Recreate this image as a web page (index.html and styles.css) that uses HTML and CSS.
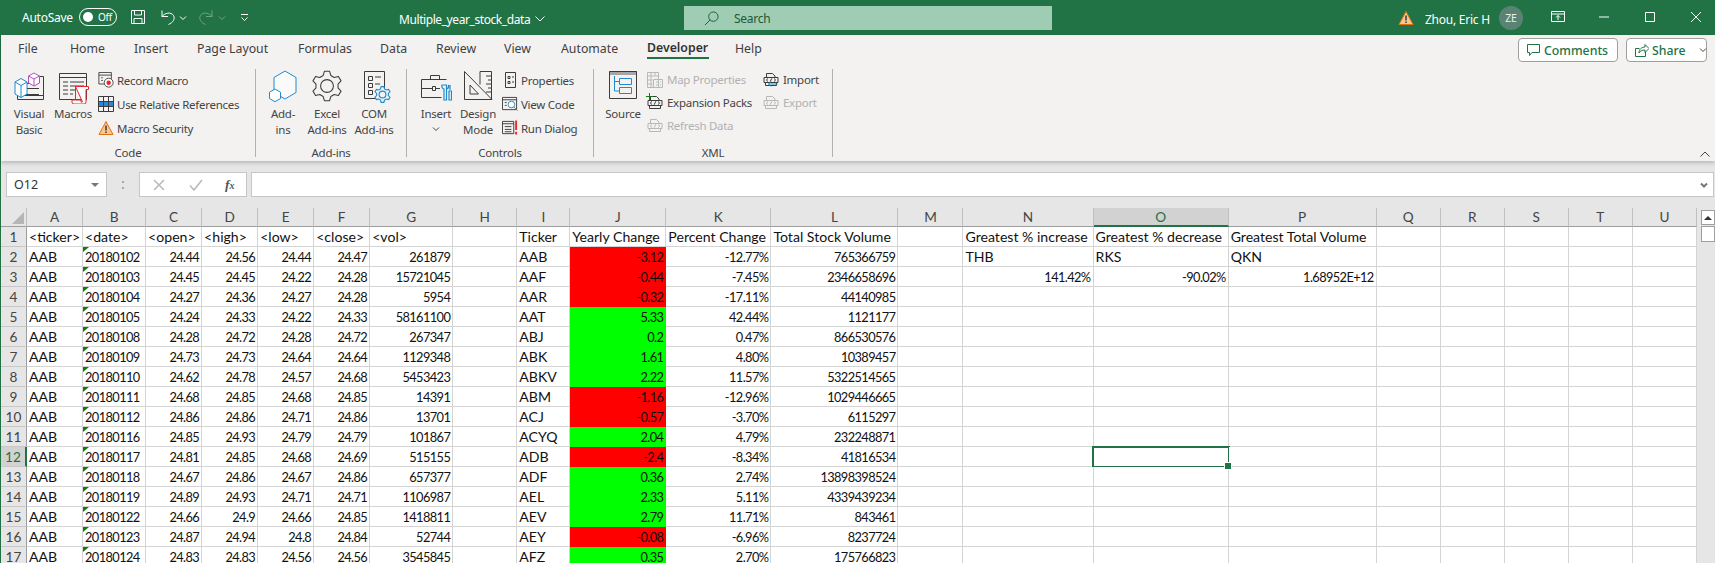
FILE: index.html
```html
<!DOCTYPE html>
<html lang="en">
<head>
<meta charset="utf-8">
<title>Multiple_year_stock_data - Excel</title>
<link rel="stylesheet" href="styles.css">
</head>
<body>
<svg class="defs" width="0" height="0" aria-hidden="true">
  <symbol id="gear" viewBox="-15 -15 30 30"><polygon points="-2.43,-13.79 2.43,-13.79 3.59,-9.87 6.75,-8.04 10.72,-9 13.16,-4.79 10.34,-1.82 10.34,1.82 13.16,4.79 10.72,9 6.75,8.04 3.59,9.87 2.43,13.79 -2.43,13.79 -3.59,9.87 -6.75,8.04 -10.72,9 -13.16,4.79 -10.34,1.82 -10.34,-1.82 -13.16,-4.79 -10.72,-9 -6.75,-8.04 -3.59,-9.87"/><circle r="6"/></symbol>
  <symbol id="xmldoc" viewBox="0 0 16 16"><path d="M3.5 5V1.5h6l2.5 2.5v1M1 5.5h14v5H1zM2.5 10.5v3h11v-3"/><path d="M5 6.5L3.3 8 5 9.5M11 6.5l1.7 1.5L11 9.5M8.8 6.3L7.2 9.7"/></symbol>
  <symbol id="caret" viewBox="0 0 8 6"><path d="M1 1.5l3 3 3-3"/></symbol>
</svg>

<header class="titlebar">
  <span class="autosave">AutoSave</span>
  <span class="toggle"><i class="knob"></i><span class="off">Off</span></span>
  <svg class="qa save" viewBox="0 0 16 16"><path d="M1.500 1.500h13v13h-13zM4.500 1.500v4.500h7v-4.500M4 14.500v-5h8v5"/></svg>
  <svg class="qa undo" viewBox="0 0 16 16"><path d="M2 1.500v6h6M2 7.500c2.500-3.500 9-5 11.500-1 2 3.500-.5 7-5 9"/></svg>
  <svg class="qc caret-undo"><use href="#caret"/></svg>
  <svg class="qa redo" viewBox="0 0 16 16"><path d="M14 1.500v6H8M14 7.500c-2.500-3.500-9-5-11.500-1-2 3.500.5 7 5 9"/></svg>
  <svg class="qc caret-redo"><use href="#caret"/></svg>
  <svg class="custom" viewBox="0 0 9 9"><path d="M1 1.500h7M1.500 4.500l3 3 3-3"/></svg>
  <span class="doc-title">Multiple_year_stock_data</span>
  <svg class="title-chev" viewBox="0 0 10 6"><path d="M.5.5l4.500 4.500L9.500.5"/></svg>
  <div class="search">
    <svg class="search-icon" viewBox="0 0 16 16"><circle cx="10" cy="6" r="5"/><path d="M6.500 9.500L1 15"/></svg>
    <span>Search</span>
  </div>
  <svg class="warn warn-title" viewBox="0 0 16 16"><path class="warn-tri" d="M8 1.500l7 13H1z"/><path class="warn-mark" d="M8 5.500v5M8 11.500v1.500"/></svg>
  <span class="user">Zhou, Eric H</span>
  <span class="avatar">ZE</span>
  <svg class="win present" viewBox="0 0 14 12"><path d="M.5.5h13v10H.5zM.5 3h13M7 9V4.500M5 6.500l2-2 2 2"/></svg>
  <svg class="win minimize" viewBox="0 0 10 10"><path d="M0 5h10"/></svg>
  <svg class="win maximize" viewBox="0 0 10 10"><path d="M.5.500h9v9h-9z"/></svg>
  <svg class="win close" viewBox="0 0 10 10"><path d="M0 0l10 10M10 0L0 10"/></svg>
</header>

<div class="app">
  <section class="ribbon">
    <div class="tabs-row">
      <nav class="tabs">
        <span>File</span><span>Home</span><span>Insert</span><span>Page Layout</span><span>Formulas</span><span>Data</span><span>Review</span><span>View</span><span>Automate</span><span class="tab-on">Developer</span><span>Help</span>
      </nav>
      <div class="actions">
        <span class="action comments"><svg class="act-ic" viewBox="0 0 14 14"><path d="M.5 1.500h12v8H5l-2.500 3v-3h-2z"/></svg>Comments</span>
        <span class="action share"><svg class="act-ic" viewBox="0 0 14 14"><path d="M.5 5.500h4M.5 5.500v8h10V9M4 10c0-4 3-6 6-6V1.500l4 4-4 4V7c-3 0-5 1-6 3z"/></svg>Share<svg class="share-caret"><use href="#caret"/></svg></span>
      </div>
    </div>

    <div class="ribbon-body">
      <div class="group g-code">
        <div class="tools">
          <div class="big w44">
            <svg class="icon" viewBox="0 0 32 36"><g class="ln"><path d="M4.500 12.500v19h26v-23h-6M14 15.500h12M14 20.500h12M8 26.500h18M4.500 27.500h26"/></g><g class="bl"><path class="wht" d="M2 14l6-3.500 6 3.500v12l-6 3.500L2 26z"/><path d="M2 14l6 3.500 6-3.500M8 17.500v12"/></g><g class="pu"><path class="wht" d="M15.500 8l5.500-3 5.500 3v7l-5.500 3-5.500-3z"/><path d="M15.500 8l5.500 3 5.500-3M21 11v7"/></g></svg>
            <span class="lbl">Visual</span><span class="lbl">Basic</span>
          </div>
          <div class="big w44">
            <svg class="icon" viewBox="0 0 32 36"><g class="ln"><path d="M2.500 5.500h27v26h-27zM2.500 9.500h27M6 14h5M13 14h14M6 18h5M13 18h14M6 22h5M13 22h5M6 26h5M13 26h3"/></g><path class="rd wht" d="M18.500 18.500h13v3h-2.500v12.500a2 2 0 0 1-2 2h-10a2 2 0 0 1-2-2v-2h9v2a1.500 1.500 0 0 0 1.500 0zM18.500 18.500v13"/></svg>
            <span class="lbl">Macros</span>
          </div>
          <div class="small-col col-code">
            <div class="small"><svg class="ic16" viewBox="0 0 17 18"><path class="ln-s" d="M.5.500h14v13H.5zM.5 3.500h14M3 6.500h2M3 9.500h2"/><circle class="rec-o" cx="11.500" cy="12" r="5"/><circle class="rec-i" cx="11.500" cy="12" r="2.500"/></svg><span>Record Macro</span></div>
            <div class="small"><svg class="ic16" viewBox="0 0 16 16"><rect class="bl-f" x="1" y="5.500" width="14" height="5"/><path class="ln-s" d="M.5.500h15v15H.5zM.5 5.500h15M.5 10.500h15M5.500.500v15M10.500.500v15"/></svg><span>Use Relative References</span></div>
            <div class="small"><svg class="ic16" viewBox="0 0 16 16"><path class="warn-tri" d="M8 1.500l7 13H1z"/><path class="warn-mark" d="M8 5.500v5M8 11.500v1.500"/></svg><span>Macro Security</span></div>
          </div>
        </div>
        <div class="group-label">Code</div>
      </div>
      <i class="sep"></i>

      <div class="group g-addins">
        <div class="tools">
          <div class="big w44">
            <svg class="icon" viewBox="0 0 32 36"><path class="bl wht2" d="M18 3l11 6.500v15L18 31l-11-6.500v-15z"/><path class="bl wht" d="M8 21l5.500 3.200v6.300L8 33.700 2.500 30.500v-6.300z"/></svg>
            <span class="lbl">Add-</span><span class="lbl">ins</span>
          </div>
          <div class="big w44">
            <svg class="icon gear-big"><use href="#gear"/></svg>
            <span class="lbl">Excel</span><span class="lbl">Add-ins</span>
          </div>
          <div class="big w50">
            <span class="com-wrap"><svg class="icon" viewBox="0 0 32 36"><path class="ln-s" d="M6.500 3.500h20v18M6.500 3.500v27h12M10.500 8.500h4v4h-4zM17 9h6M10.500 15.500h4v4h-4zM17 16h5M10.500 22.500h4v4h-4z"/></svg><svg class="gear-small"><use href="#gear"/></svg></span>
            <span class="lbl">COM</span><span class="lbl">Add-ins</span>
          </div>
        </div>
        <div class="group-label">Add-ins</div>
      </div>
      <i class="sep"></i>

      <div class="group g-controls">
        <div class="tools">
          <div class="big w44">
            <svg class="icon" viewBox="0 0 32 36"><path class="ln-s" d="M1.500 11.500h25M1.500 11.500v18h20M1.500 20.500h11M16 20.500h4M10.500 11.500v-4h9v4M12.500 18.500h3v4h-3z"/><path class="bl bl-w" d="M22 17a3 3 0 0 0 2 4v11h2.500V21a3 3 0 0 0 2-4v3h-2v-3zM30 17v5M29 23h2.500v9H29z"/></svg>
            <span class="lbl">Insert</span><svg class="lbl-caret"><use href="#caret"/></svg>
          </div>
          <div class="big w40">
            <svg class="icon" viewBox="0 0 32 36"><path class="ln-s" d="M2.500 3.500L30 31.500H2.500zM8 17l8.500 9H8zM18 3.500h11.500v28M18 3.500v13M24 8h5.500M26 12h3.500M24 16h5.500M26 20h3.500M24 24h5.500"/></svg>
            <span class="lbl">Design</span><span class="lbl">Mode</span>
          </div>
          <div class="small-col col-ctrl">
            <div class="small"><svg class="ic16" viewBox="0 0 16 16"><path class="ln-s" d="M3.500.500h10v15h-10zM6 4.500h2v2H6zM10 5h2M6 9.500h2v2H6zM10 10h2"/></svg><span>Properties</span></div>
            <div class="small"><svg class="ic16" viewBox="0 0 17 17"><path class="ln-s" d="M.5 1.500h15v13H.5zM.5 4h15M3 7h2M3 10h2"/><circle class="bl wht" cx="10" cy="9" r="3.500"/><path class="bl" d="M12.500 11.500l4 4"/></svg><span>View Code</span></div>
            <div class="small"><svg class="ic16" viewBox="0 0 17 17"><path class="ln-s" d="M.5 1.500h12v13H.5zM.5 4h12M3 7h7M3 10h7M3 12.500h7"/><path class="rd rd-b" d="M15 .500v10M15 12.500v3"/></svg><span>Run Dialog</span></div>
          </div>
        </div>
        <div class="group-label">Controls</div>
      </div>
      <i class="sep"></i>

      <div class="group g-xml">
        <div class="tools">
          <div class="big w48">
            <svg class="icon" viewBox="0 0 32 36"><rect class="src-h" x="2" y="3" width="28" height="4"/><path class="ln-s" d="M2.500 3.500h27v27h-27z"/><path class="bl" d="M12.500 10.500h12v6h-12zM12.500 19.500h12v6h-12zM7.500 8v15h5M7.500 13.500h5"/></svg>
            <span class="lbl">Source</span>
          </div>
          <div class="small-col col-xml">
            <div class="small off-state"><svg class="ic16" viewBox="0 0 16 16"><path class="dis" d="M.5.500h11v15H.5zM.5 4h11M.5 8h5M.5 12h5M4 .500v15M8 .500v3M6.500 7.500h9v8h-9zM9 10h2M13 10h1M9 13h2M13 13h1"/></svg><span>Map Properties</span></div>
            <div class="small"><span class="plus-wrap"><svg class="ic16 xml-ic"><use href="#xmldoc"/></svg><svg class="plus" viewBox="0 0 7 7"><path d="M3.500 0v7M0 3.500h7"/></svg></span><span>Expansion Packs</span></div>
            <div class="small off-state"><svg class="ic16 xml-dis"><use href="#xmldoc"/></svg><span>Refresh Data</span></div>
          </div>
          <div class="small-col col-xml2">
            <div class="small"><span class="plus-wrap"><svg class="ic16 xml-ic"><use href="#xmldoc"/></svg><svg class="io-arrow" viewBox="0 0 10 6"><path d="M10 3H1M3.500.500L1 3l2.500 2.500"/></svg></span><span>Import</span></div>
            <div class="small off-state"><svg class="ic16 xml-dis"><use href="#xmldoc"/></svg><span>Export</span></div>
          </div>
        </div>
        <div class="group-label">XML</div>
      </div>
      <i class="sep"></i>
      <svg class="collapse" viewBox="0 0 10 6"><path d="M.5 5.500L5 1l4.500 4.500"/></svg>
    </div>
  </section>

  <div class="formula-row">
    <div class="namebox"><span>O12</span><i class="tri-down"></i></div>
    <span class="grip"></span>
    <div class="fx-box">
      <svg class="fx-ic" viewBox="0 0 12 12"><path d="M1 1l10 10M11 1L1 11"/></svg>
      <svg class="fx-ic check" viewBox="0 0 14 12"><path d="M1 6.500L5 11 13 1"/></svg>
      <span class="fx">f<sub>x</sub></span>
    </div>
    <div class="formula-input"><svg class="formula-caret"><use href="#caret"/></svg></div>
  </div>

  <div class="sheet-row">
    <table class="sheet">
      <colgroup><col class="c-h"><col class="c56"><col class="c63"><col class="c56"><col class="c56"><col class="c56"><col class="c56"><col class="c83"><col class="c64"><col class="c53"><col class="c96"><col class="c105"><col class="c127"><col class="c65"><col class="c130"><col class="c135"><col class="c148"><col class="c64"><col class="c64"><col class="c64"><col class="c64"><col class="c64"></colgroup>
      <thead>
        <tr><th class="corner"><i class="corner-tri"></i></th><th>A</th><th>B</th><th>C</th><th>D</th><th>E</th><th>F</th><th>G</th><th>H</th><th>I</th><th>J</th><th>K</th><th>L</th><th>M</th><th>N</th><th class="col-on">O</th><th>P</th><th>Q</th><th>R</th><th>S</th><th>T</th><th>U</th></tr>
      </thead>
      <tbody>
        <tr><th>1</th><td>&lt;ticker&gt;</td><td>&lt;date&gt;</td><td>&lt;open&gt;</td><td>&lt;high&gt;</td><td>&lt;low&gt;</td><td>&lt;close&gt;</td><td>&lt;vol&gt;</td><td></td><td>Ticker</td><td>Yearly Change</td><td>Percent Change</td><td>Total Stock Volume</td><td></td><td>Greatest % increase</td><td>Greatest % decrease</td><td>Greatest Total Volume</td><td></td><td></td><td></td><td></td><td></td></tr>
        <tr><th>2</th><td>AAB</td><td class="d">20180102</td><td class="n">24.44</td><td class="n">24.56</td><td class="n">24.44</td><td class="n">24.47</td><td class="n">261879</td><td></td><td>AAB</td><td class="n red">-3.12</td><td class="n">-12.77%</td><td class="n">765366759</td><td></td><td>THB</td><td>RKS</td><td>QKN</td><td></td><td></td><td></td><td></td><td></td></tr>
        <tr><th>3</th><td>AAB</td><td class="d">20180103</td><td class="n">24.45</td><td class="n">24.45</td><td class="n">24.22</td><td class="n">24.28</td><td class="n">15721045</td><td></td><td>AAF</td><td class="n red">-0.44</td><td class="n">-7.45%</td><td class="n">2346658696</td><td></td><td class="n">141.42%</td><td class="n">-90.02%</td><td class="n">1.68952E+12</td><td></td><td></td><td></td><td></td><td></td></tr>
        <tr><th>4</th><td>AAB</td><td class="d">20180104</td><td class="n">24.27</td><td class="n">24.36</td><td class="n">24.27</td><td class="n">24.28</td><td class="n">5954</td><td></td><td>AAR</td><td class="n red">-0.32</td><td class="n">-17.11%</td><td class="n">44140985</td><td></td><td></td><td></td><td></td><td></td><td></td><td></td><td></td><td></td></tr>
        <tr><th>5</th><td>AAB</td><td class="d">20180105</td><td class="n">24.24</td><td class="n">24.33</td><td class="n">24.22</td><td class="n">24.33</td><td class="n">58161100</td><td></td><td>AAT</td><td class="n grn">5.33</td><td class="n">42.44%</td><td class="n">1121177</td><td></td><td></td><td></td><td></td><td></td><td></td><td></td><td></td><td></td></tr>
        <tr><th>6</th><td>AAB</td><td class="d">20180108</td><td class="n">24.28</td><td class="n">24.72</td><td class="n">24.28</td><td class="n">24.72</td><td class="n">267347</td><td></td><td>ABJ</td><td class="n grn">0.2</td><td class="n">0.47%</td><td class="n">866530576</td><td></td><td></td><td></td><td></td><td></td><td></td><td></td><td></td><td></td></tr>
        <tr><th>7</th><td>AAB</td><td class="d">20180109</td><td class="n">24.73</td><td class="n">24.73</td><td class="n">24.64</td><td class="n">24.64</td><td class="n">1129348</td><td></td><td>ABK</td><td class="n grn">1.61</td><td class="n">4.80%</td><td class="n">10389457</td><td></td><td></td><td></td><td></td><td></td><td></td><td></td><td></td><td></td></tr>
        <tr><th>8</th><td>AAB</td><td class="d">20180110</td><td class="n">24.62</td><td class="n">24.78</td><td class="n">24.57</td><td class="n">24.68</td><td class="n">5453423</td><td></td><td>ABKV</td><td class="n grn">2.22</td><td class="n">11.57%</td><td class="n">5322514565</td><td></td><td></td><td></td><td></td><td></td><td></td><td></td><td></td><td></td></tr>
        <tr><th>9</th><td>AAB</td><td class="d">20180111</td><td class="n">24.68</td><td class="n">24.85</td><td class="n">24.68</td><td class="n">24.85</td><td class="n">14391</td><td></td><td>ABM</td><td class="n red">-1.16</td><td class="n">-12.96%</td><td class="n">1029446665</td><td></td><td></td><td></td><td></td><td></td><td></td><td></td><td></td><td></td></tr>
        <tr><th>10</th><td>AAB</td><td class="d">20180112</td><td class="n">24.86</td><td class="n">24.86</td><td class="n">24.71</td><td class="n">24.86</td><td class="n">13701</td><td></td><td>ACJ</td><td class="n red">-0.57</td><td class="n">-3.70%</td><td class="n">6115297</td><td></td><td></td><td></td><td></td><td></td><td></td><td></td><td></td><td></td></tr>
        <tr><th>11</th><td>AAB</td><td class="d">20180116</td><td class="n">24.85</td><td class="n">24.93</td><td class="n">24.79</td><td class="n">24.79</td><td class="n">101867</td><td></td><td>ACYQ</td><td class="n grn">2.04</td><td class="n">4.79%</td><td class="n">232248871</td><td></td><td></td><td></td><td></td><td></td><td></td><td></td><td></td><td></td></tr>
        <tr><th class="row-on">12</th><td>AAB</td><td class="d">20180117</td><td class="n">24.81</td><td class="n">24.85</td><td class="n">24.68</td><td class="n">24.69</td><td class="n">515155</td><td></td><td>ADB</td><td class="n red">-2.4</td><td class="n">-8.34%</td><td class="n">41816534</td><td></td><td></td><td class="sel"></td><td></td><td></td><td></td><td></td><td></td><td></td></tr>
        <tr><th>13</th><td>AAB</td><td class="d">20180118</td><td class="n">24.67</td><td class="n">24.86</td><td class="n">24.67</td><td class="n">24.86</td><td class="n">657377</td><td></td><td>ADF</td><td class="n grn">0.36</td><td class="n">2.74%</td><td class="n">13898398524</td><td></td><td></td><td></td><td></td><td></td><td></td><td></td><td></td><td></td></tr>
        <tr><th>14</th><td>AAB</td><td class="d">20180119</td><td class="n">24.89</td><td class="n">24.93</td><td class="n">24.71</td><td class="n">24.71</td><td class="n">1106987</td><td></td><td>AEL</td><td class="n grn">2.33</td><td class="n">5.11%</td><td class="n">4339439234</td><td></td><td></td><td></td><td></td><td></td><td></td><td></td><td></td><td></td></tr>
        <tr><th>15</th><td>AAB</td><td class="d">20180122</td><td class="n">24.66</td><td class="n">24.9</td><td class="n">24.66</td><td class="n">24.85</td><td class="n">1418811</td><td></td><td>AEV</td><td class="n grn">2.79</td><td class="n">11.71%</td><td class="n">843461</td><td></td><td></td><td></td><td></td><td></td><td></td><td></td><td></td><td></td></tr>
        <tr><th>16</th><td>AAB</td><td class="d">20180123</td><td class="n">24.87</td><td class="n">24.94</td><td class="n">24.8</td><td class="n">24.84</td><td class="n">52744</td><td></td><td>AEY</td><td class="n red">-0.08</td><td class="n">-6.96%</td><td class="n">8237724</td><td></td><td></td><td></td><td></td><td></td><td></td><td></td><td></td><td></td></tr>
        <tr><th>17</th><td>AAB</td><td class="d">20180124</td><td class="n">24.83</td><td class="n">24.83</td><td class="n">24.56</td><td class="n">24.56</td><td class="n">3545845</td><td></td><td>AFZ</td><td class="n grn">0.35</td><td class="n">2.70%</td><td class="n">175766823</td><td></td><td></td><td></td><td></td><td></td><td></td><td></td><td></td><td></td></tr>
      </tbody>
    </table>
    <div class="vscroll"><span class="sb-up"><i class="tri-up"></i></span><span class="sb-thumb"></span></div>
  </div>
</div>
</body>
</html>
```
FILE: styles.css
```css
* { box-sizing: border-box; }
html, body { margin: 0; padding: 0; }
body {
  width: 1715px; height: 563px; overflow: hidden;
  background: #e6e6e6;
  font-family: "Noto Sans", "Open Sans", sans-serif;
  color: #333;
}
svg { display: block; flex: none; fill: none; }
.defs { position: absolute; }

/* title bar */
.titlebar {
  display: flex; align-items: center; height: 35px;
  padding-left: 22px; background: #217346; color: #fff;
  font-size: 12px; letter-spacing: -.25px; white-space: nowrap;
}
.titlebar svg { stroke: #fff; }
.autosave { width: 50px; }
.toggle {
  display: flex; align-items: center; width: 38px; height: 18px;
  margin: -2px 0 0 7px; padding-left: 3px;
  border: 1px solid #fff; border-radius: 9px; font-size: 10px;
}
.knob { width: 10px; height: 10px; border-radius: 50%; background: #fff; }
.off { margin-left: 5px; }
.qa { width: 16px; height: 16px; margin-top: -2px; }
.save { margin-left: 13px; }
.undo { margin-left: 14px; }
.qc { width: 8px; height: 6px; }
.caret-undo { margin-left: 3px; }
.redo { margin-left: 11px; opacity: .35; }
.caret-redo { margin-left: 4px; opacity: .35; }
.custom { width: 9px; height: 9px; margin-left: 14px; }
.doc-title { width: 131px; margin-left: 150px; padding-top: 4px; letter-spacing: -.42px; }
.title-chev { width: 10px; height: 6px; margin: 2px 0 0 5px; }
.search {
  display: flex; align-items: center; width: 368px; height: 24px;
  margin: 1px 0 0 139px; padding-left: 20px; gap: 15px;
  background: #9fcdb3; color: #1c5a37;
}
.titlebar .search-icon { width: 15px; height: 15px; stroke: #1c5a37; }
.warn { width: 16px; height: 16px; }
.warn-title { margin-left: 346px; }
.warn-tri { fill: #fbc690; stroke: #e3710e; }
.warn-mark { stroke: #444; stroke-width: 1.6; }
.titlebar .warn-tri { stroke: #e3710e; }
.titlebar .warn-mark { stroke: #444; }
.user { width: 65px; margin-left: 11px; padding-top: 3px; }
.avatar {
  display: flex; align-items: center; justify-content: center;
  width: 24px; height: 24px; margin-left: 9px;
  border-radius: 50%; background: #5a8373; font-size: 10.5px; color: #e8f0ec;
}
.win { margin-top: -2px; }
.present { width: 14px; height: 12px; margin-left: 28px; }
.minimize { width: 10px; height: 10px; margin-left: 34px; }
.maximize { width: 10px; height: 10px; margin-left: 36px; }
.close { width: 10px; height: 10px; margin-left: 36px; }

.app { border-left: 1px solid #217346; }

/* ribbon */
.ribbon {
  position: relative; height: 126px; background: #f3f2f1;
  box-shadow: 0 2px 4px rgba(0, 0, 0, .2);
}
.tabs-row { display: flex; height: 27px; padding-right: 8px; }
.tabs {
  display: grid; align-items: center; height: 26px; padding: 0 0 0 17px;
  grid-template-columns: 52px 64px 63px 101px 82px 56px 68px 57px 86px 88px 40px;
  font-size: 12.3px; color: #3f3f3f;
}
.tabs span { white-space: nowrap; }
.tab-on { position: relative; height: 22px; line-height: 22px; font-weight: 600; color: #333; }
.tab-on::after {
  content: ""; position: absolute; left: 0; width: 62px; bottom: 0; top: 20px;
  background: #217346;
}
.actions { display: flex; gap: 8px; margin: 3px 0 0 auto; }
.action {
  display: flex; align-items: center; height: 24px; padding-left: 8px; gap: 3px;
  background: #fff; border: 1px solid #a19f9d; border-radius: 4px;
  font-size: 12.3px; font-weight: 500; color: #217346; white-space: nowrap;
}
.comments { width: 100px; }
.share { width: 81px; }
.act-ic { width: 14px; height: 14px; stroke: #217346; }
.share-caret { width: 8px; height: 6px; margin-left: 10px; stroke: #444; }

.ribbon-body { display: flex; height: 99px; }
.group { display: flex; flex-direction: column; flex: none; }
.g-code { width: 254px; }
.g-addins { width: 150px; }
.g-controls { width: 186px; }
.g-xml { width: 238px; }
.tools { display: flex; flex: 1; padding-top: 6px; }
.g-code .tools { padding-left: 6px; }
.g-addins .tools { padding-left: 5px; }
.g-controls .tools { padding-left: 7px; }
.g-xml .tools { padding-left: 5px; }
.group-label { height: 16px; line-height: 16px; text-align: center; font-size: 11.5px; letter-spacing: -.25px; color: #444; }
.sep { flex: none; width: 1px; height: 88px; margin-top: 7px; background: #b3b0ad; }
.big { display: flex; flex-direction: column; align-items: center; flex: none; }
.w40 { width: 40px; }
.w44 { width: 44px; }
.w48 { width: 48px; }
.w50 { width: 50px; }
.icon { width: 32px; height: 36px; margin-bottom: 2px; stroke-width: 1; }
.lbl { height: 16px; line-height: 16px; font-size: 11.5px; letter-spacing: -.25px; color: #444; white-space: nowrap; }
.lbl-caret { width: 8px; height: 6px; margin-top: 4px; stroke: #444; }
.ln, .ln-s { stroke: #3c3c3c; }
.bl { stroke: #1e8bcd; }
.bl-w { stroke-width: 1.2; }
.pu { stroke: #b14fc5; }
.rd { stroke: #e8282b; }
.rd-b { stroke-width: 2; }
.wht { fill: #fff; }
.wht2 { fill: #fafafa; }
.gear-big { stroke: #3c3c3c; stroke-width: 1; stroke-linejoin: round; }
.com-wrap { position: relative; display: block; width: 32px; height: 38px; }
.gear-small {
  position: absolute; right: -1px; top: 18px; width: 17px; height: 17px;
  fill: #f3f2f1; stroke: #1e8bcd; stroke-width: 2;
}
.small-col { display: flex; flex-direction: column; flex: none; }
.col-code { margin-left: 3px; }
.col-ctrl { margin-left: 4px; }
.col-xml { width: 116px; }
.col-xml2 { width: 70px; }
.small {
  display: flex; align-items: center; gap: 3px; height: 24px;
  font-size: 11.5px; letter-spacing: -.28px; color: #444; white-space: nowrap;
}
.col-xml .small, .col-xml2 .small { height: 23px; gap: 4px; }
.small.off-state { color: #b1b1b1; }
.ic16 { width: 16px; height: 16px; }
.rec-o { fill: #fff; stroke: #3c3c3c; }
.rec-i { fill: #e8282b; }
.bl-f { fill: #2b88d8; }
.dis { stroke: #b8b8b8; }
.xml-ic { stroke: #3c3c3c; }
.xml-dis { stroke: #b8b8b8; }
.plus-wrap { position: relative; display: block; }
.plus {
  position: absolute; left: -1px; top: -2px; width: 7px; height: 7px; stroke: #107c10;
}
.io-arrow {
  position: absolute; left: 4px; top: 9px; width: 11px; height: 6px; stroke: #1e8bcd;
}
.src-h { fill: #a6a6a6; }
.collapse { width: 10px; height: 6px; margin: 89px 5px 0 auto; stroke: #444; }

/* formula bar */
.formula-row { display: flex; height: 47px; padding: 11px 1px 11px 5px; }
.namebox {
  display: flex; align-items: center; justify-content: space-between;
  width: 101px; padding: 0 7px;
  background: #fff; border: 1px solid #c6c6c6;
  font-size: 12.5px; color: #333;
}
.tri-down { border: 4px solid transparent; border-top: 4px solid #777; border-bottom: 0; }
.grip {
  width: 2px; height: 8px; margin: 9px 0 0 15px;
  border-top: 2px dotted #aaa; border-bottom: 2px dotted #aaa;
}
.fx-box {
  display: flex; align-items: center; width: 108px; margin-left: 15px; padding-left: 13px;
  background: #fff; border: 1px solid #c6c6c6;
}
.fx-ic { width: 12px; height: 12px; stroke: #bbb; stroke-width: 1.6; }
.check { width: 14px; margin-left: 24px; }
.fx {
  margin-left: 22px; font-family: "Liberation Serif", serif; font-style: italic;
  font-size: 13.5px; color: #555; font-weight: 700;
}
.fx sub { font-size: 10px; vertical-align: baseline; }
.formula-input {
  display: flex; align-items: center; justify-content: flex-end;
  flex: 1; margin-left: 4px; padding-right: 5px;
  background: #fff; border: 1px solid #c6c6c6;
}
.formula-caret { width: 8px; height: 6px; stroke: #777; stroke-width: 2; }

/* sheet */
.sheet-row { display: flex; }
.sheet {
  table-layout: fixed; border-collapse: separate; border-spacing: 0;
  width: 1696px; flex: none;
  font-family: Lato, "Liberation Sans", sans-serif; font-size: 14.1px;
  color: #111;
}
.c-h { width: 26px; }
.c53 { width: 53px; } .c56 { width: 56px; } .c63 { width: 63px; } .c64 { width: 64px; }
.c65 { width: 65px; } .c83 { width: 83px; } .c96 { width: 96px; } .c105 { width: 105px; }
.c127 { width: 127px; } .c130 { width: 130px; } .c135 { width: 135px; } .c148 { width: 148px; }
.sheet th {
  padding: 0; height: 20px; font-weight: 400; font-size: 13.6px; text-align: center;
  background: #e6e6e6; color: #444;
  border-right: 1px solid #b5b5b5; border-bottom: 1px solid #c8c8c8;
}
.sheet thead th { height: 19px; border-bottom: 1px solid #9e9e9e; border-right: 1px solid #c0c0c0; }
.sheet tbody th { border-right: 1px solid #9e9e9e; }
.corner { position: relative; }
.corner-tri {
  position: absolute; right: 2px; bottom: 2px; width: 0; height: 0;
  border-left: 12px solid transparent; border-bottom: 12px solid #b5b5b5;
}
.sheet thead .col-on { background: #d2d2d2; color: #217346; border-bottom: 2px solid #217346; }
.sheet tbody .row-on { background: #d2d2d2; color: #217346; border-right: 2px solid #217346; }
.sheet td {
  position: relative; height: 20px; padding: 0 2px; overflow: visible;
  vertical-align: bottom; line-height: 20px; white-space: nowrap;
  background: #fff; border-right: 1px solid #d4d4d4; box-shadow: inset 0 -1px 0 #d4d4d4;
}
.sheet .n, .sheet .d { font-size: 12.8px; letter-spacing: -.6px; }
.sheet .n { text-align: right; }
.sheet .red { background: #f00; border-color: #f00; box-shadow: none; }
.sheet .grn { background: #0f0; border-color: #0f0; box-shadow: none; }
.d::before {
  content: ""; position: absolute; left: 0; top: 0; width: 0; height: 0;
  border-top: 5px solid #107c10; border-right: 6px solid transparent;
}
.sel::after {
  content: ""; position: absolute; left: -2px; right: -2px; top: -1px; bottom: -1px;
  border: 2px solid #217346;
}
.sel::before {
  content: ""; position: absolute; right: -4px; bottom: -3px; width: 6px; height: 6px; z-index: 1;
  background: #217346; border: 1px solid #fff;
}
.vscroll {
  display: flex; flex-direction: column; flex: none; width: 14px; margin-left: 4px; padding-top: 2px;
}
.sb-up, .sb-thumb { display: flex; align-items: center; justify-content: center; background: #fff; border: 1px solid #9e9e9e; }
.sb-up { height: 15px; }
.sb-thumb { height: 16px; margin-top: 1px; }
.tri-up { border: 4px solid transparent; border-bottom: 4px solid #333; border-top: 0; }
```
